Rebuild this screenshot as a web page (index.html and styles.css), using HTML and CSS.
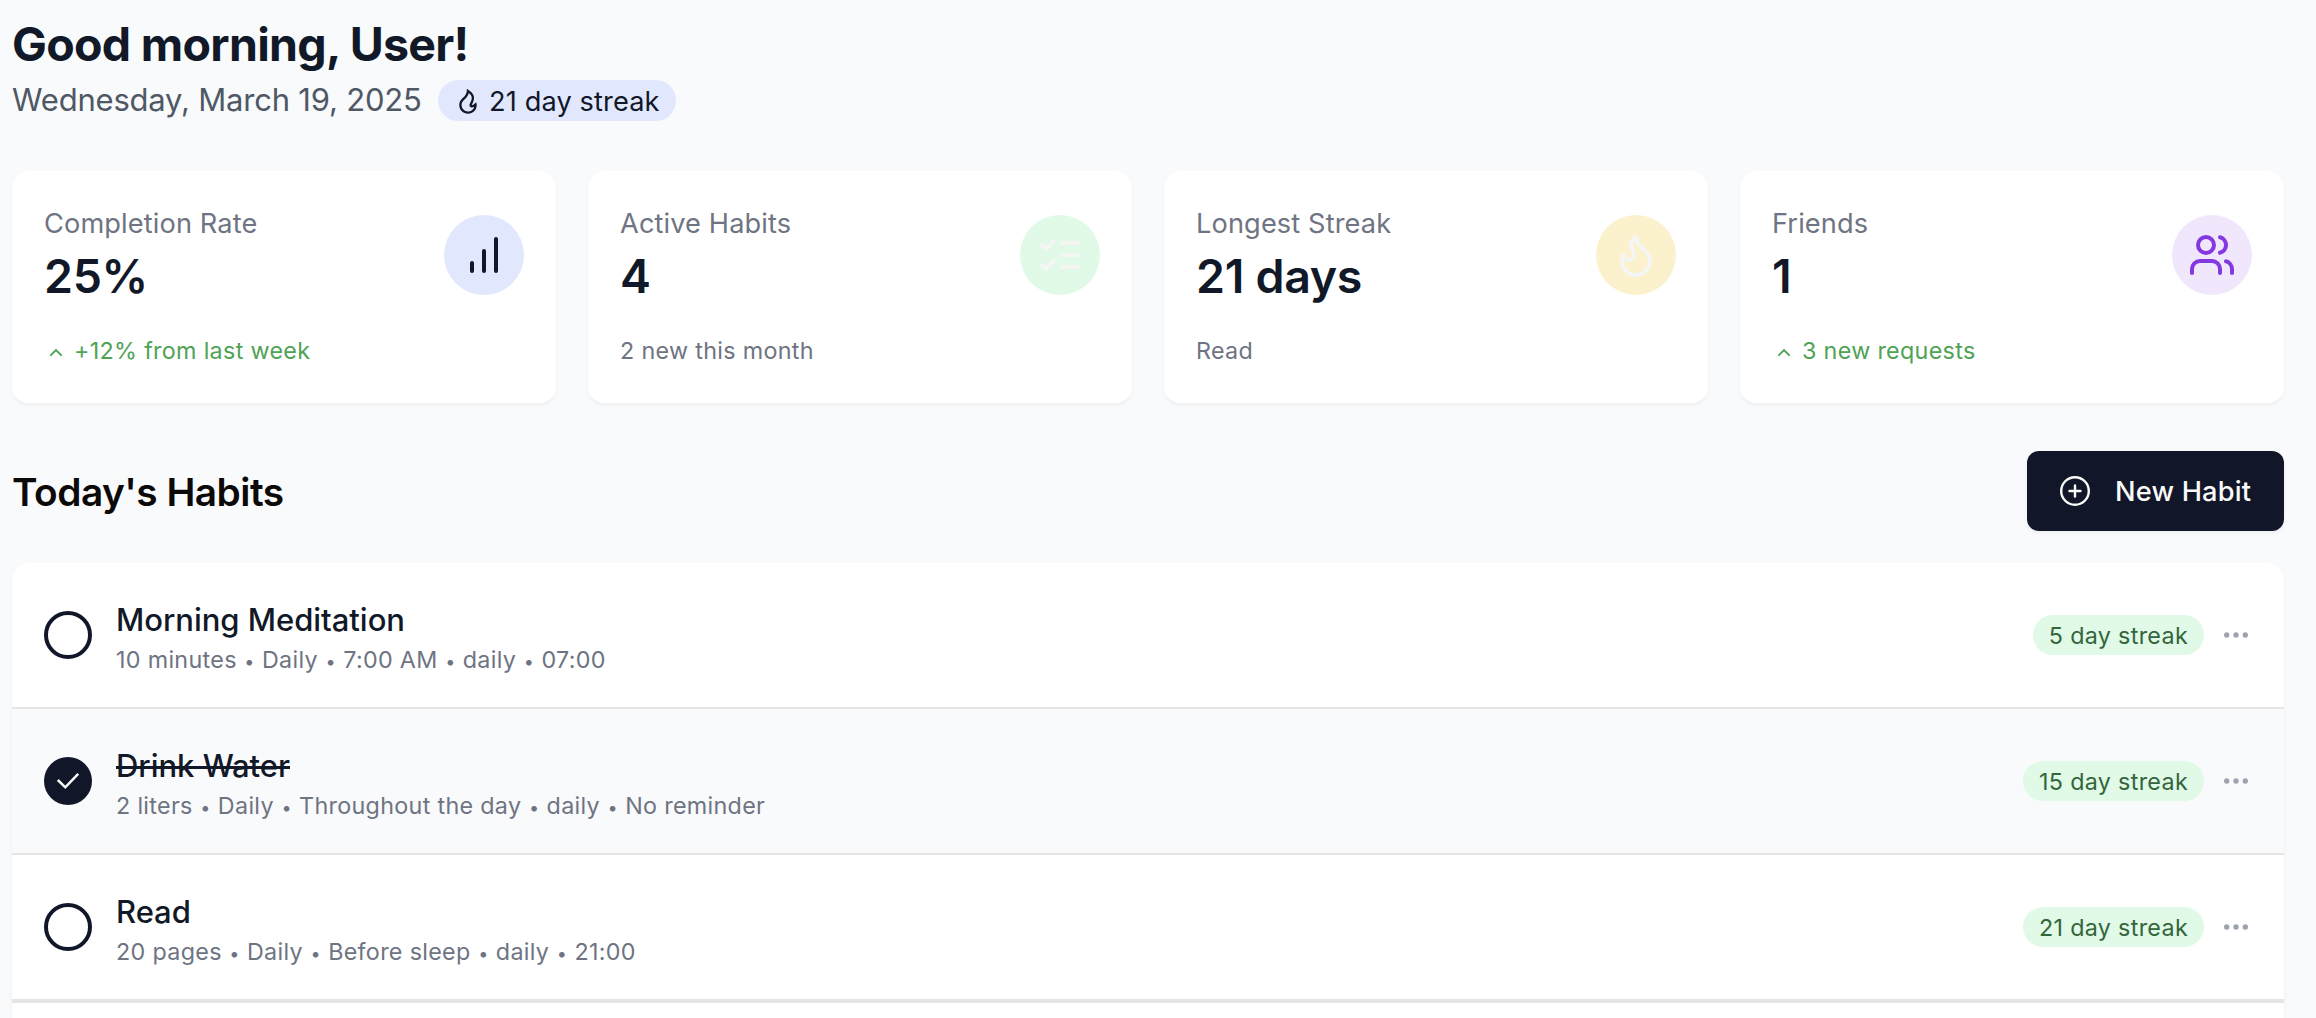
FILE: index.html
```html
<!DOCTYPE html>
<html lang="en">
<head>
<meta charset="utf-8">
<title>Habits</title>
<link rel="stylesheet" href="styles.css">
</head>
<body>
<main class="page">
  <header class="greeting">
    <h1>Good morning, User!</h1>
    <div class="sub">
      <span class="date">Wednesday, March 19, 2025</span>
      <span class="streak-pill"><svg class="i-flame" viewBox="0 0 24 24"><path fill="currentColor" d="M12 23C16.1421 23 19.5 19.6421 19.5 15.5C19.5 14.6345 19.2697 13.8032 19 13.0296C17.3333 14.6765 16.0667 15.5 15.2 15.5C19.1954 8.5 17 5.5 11 1.5C11.5 6.49951 8.20403 8.77375 6.86179 10.0366C5.40786 11.4045 4.5 13.3462 4.5 15.5C4.5 19.6421 7.85786 23 12 23ZM12.7094 5.23498C15.9511 7.98528 15.9666 10.1223 13.463 14.5086C12.702 15.8419 13.6648 17.5 15.2 17.5C15.8884 17.5 16.5841 17.2992 17.3189 16.9051C16.6979 19.262 14.5519 21 12 21C8.96243 21 6.5 18.5376 6.5 15.5C6.5 13.9608 7.13279 12.5276 8.23225 11.4932C8.35826 11.3747 8.99749 10.8081 9.02477 10.7836C9.44862 10.4021 9.7978 10.0663 10.1429 9.69677C11.3733 8.37932 12.2571 6.91631 12.7094 5.23498Z"/></svg><span>21 day streak</span></span>
    </div>
  </header>

  <section class="stats">
    <article class="card">
      <div class="card-top">
        <div><div class="label">Completion Rate</div><div class="value">25%</div></div>
        <div class="disc indigo"><svg class="icon" viewBox="0 0 24 24"><path d="M6 20v-4M12 20V10M18 20V4"/></svg></div>
      </div>
      <div class="note up"><svg class="chev" viewBox="0 0 24 24"><path d="M17.700 14.700l-5.700-5.700-5.700 5.700"/></svg><span>+12% from last week</span></div>
    </article>
    <article class="card">
      <div class="card-top">
        <div><div class="label">Active Habits</div><div class="value">4</div></div>
        <div class="disc green"><svg class="icon" viewBox="0 0 24 24"><path d="M3 17l2 2 4-4M3 7l2 2 4-4M13 6h8M13 12h8M13 18h8"/></svg></div>
      </div>
      <div class="note">2 new this month</div>
    </article>
    <article class="card">
      <div class="card-top">
        <div><div class="label">Longest Streak</div><div class="value">21 days</div></div>
        <div class="disc amber"><svg class="icon" viewBox="0 0 24 24"><path d="M8.5 14.5A2.5 2.5 0 0 0 11 12c0-1.38-.5-2-1-3-1.072-2.143-.224-4.054 2-6 .5 2.5 2 4.9 4 6.5 2 1.6 3 3.5 3 5.5a7 7 0 1 1-14 0c0-1.153.433-2.294 1-3a2.5 2.5 0 0 0 2.5 2.5z"/></svg></div>
      </div>
      <div class="note">Read</div>
    </article>
    <article class="card">
      <div class="card-top">
        <div><div class="label">Friends</div><div class="value">1</div></div>
        <div class="disc purple"><svg class="icon" viewBox="0 0 24 24"><path d="M16 21v-2a4 4 0 0 0-4-4H6a4 4 0 0 0-4 4v2M22 21v-2a4 4 0 0 0-3-3.87M16 3.13a4 4 0 0 1 0 7.75"/><circle cx="9" cy="7" r="4"/></svg></div>
      </div>
      <div class="note up"><svg class="chev" viewBox="0 0 24 24"><path d="M17.700 14.700l-5.700-5.700-5.700 5.700"/></svg><span>3 new requests</span></div>
    </article>
  </section>

  <div class="section-head">
    <h2>Today's Habits</h2>
    <button class="new-btn"><svg class="i-plus" viewBox="0 0 32 32"><circle cx="16" cy="16" r="13.8"/><path d="M16 10.500v11M10.500 16h11"/></svg><span>New Habit</span></button>
  </div>

  <section class="habits">
    <div class="row">
      <span class="check"></span>
      <div class="info"><div class="name">Morning Meditation</div><div class="meta">10 minutes<i>•</i>Daily<i>•</i>7:00 AM<i>•</i>daily<i>•</i>07:00</div></div>
      <span class="tag">5 day streak</span>
      <svg class="dots" viewBox="0 0 24 6"><circle cx="2.7" cy="3" r="2.7"/><circle cx="12" cy="3" r="2.7"/><circle cx="21.3" cy="3" r="2.7"/></svg>
    </div>
    <div class="row done">
      <span class="check"><svg viewBox="0 0 48 48"><path d="M13.800 23l7.500 7.300L34.200 16.800"/></svg></span>
      <div class="info"><div class="name"><span>Drink Water</span></div><div class="meta">2 liters<i>•</i>Daily<i>•</i>Throughout the day<i>•</i>daily<i>•</i>No reminder</div></div>
      <span class="tag">15 day streak</span>
      <svg class="dots" viewBox="0 0 24 6"><circle cx="2.7" cy="3" r="2.7"/><circle cx="12" cy="3" r="2.7"/><circle cx="21.3" cy="3" r="2.7"/></svg>
    </div>
    <div class="row">
      <span class="check"></span>
      <div class="info"><div class="name">Read</div><div class="meta">20 pages<i>•</i>Daily<i>•</i>Before sleep<i>•</i>daily<i>•</i>21:00</div></div>
      <span class="tag">21 day streak</span>
      <svg class="dots" viewBox="0 0 24 6"><circle cx="2.7" cy="3" r="2.7"/><circle cx="12" cy="3" r="2.7"/><circle cx="21.3" cy="3" r="2.7"/></svg>
    </div>
    <div class="more"></div>
  </section>
</main>
</body>
</html>
```
FILE: styles.css
```css
* { box-sizing: border-box; }
html, body { height: 100%; }
body { margin: 0; background: #f9fafc; color: #111827; font-family: Inter, "Liberation Sans", sans-serif; overflow: hidden; }
svg { display: block; flex: none; fill: none; stroke-linecap: round; stroke-linejoin: round; }
h1, h2 { margin: 0; }
.page { padding: 12px 32px 0 12px; }
h1 { font-size: 46.5px; line-height: 64px; font-weight: 700; letter-spacing: -.7px; }
.sub { display: flex; align-items: center; height: 49px; }
.date { width: 426px; padding-bottom: 2px; font-size: 31px; line-height: 46px; letter-spacing: -.2px; color: #4f5865; white-space: nowrap; }
.streak-pill { display: flex; align-items: center; height: 41px; width: 238px; padding-left: 16px; border-radius: 21px; background: #e1e7fd; color: #111729; font-size: 27.2px; letter-spacing: .12px; white-space: nowrap; }
.streak-pill span { padding-top: 1px; }
.i-flame { width: 28px; height: 28px; margin-right: 7px; }
.stats { display: grid; grid-template-columns: repeat(4, 1fr); gap: 32px; margin-top: 46px; }
.card { height: 232px; padding: 32px; background: #fff; border-radius: 16px; box-shadow: 0 2px 4px rgba(0, 0, 0, .05); }
.card-top { display: flex; justify-content: space-between; align-items: flex-start; height: 104px; }
.label { padding-top: 1px; font-size: 27.2px; line-height: 40px; letter-spacing: .12px; color: #6e7482; }
.value { font-size: 46.5px; line-height: 64px; font-weight: 600; letter-spacing: -.3px; }
.disc { width: 80px; height: 80px; margin-top: 12px; border-radius: 50%; display: grid; place-items: center; }
.icon { width: 48px; height: 48px; stroke: currentColor; stroke-width: 2; }
.indigo { background: #e1e7fd; color: #111729; }
.green { background: #e1f9e7; color: #f5f5f4; }
.amber { background: #fcf1cd; color: #f5f5f4; }
.purple { background: #f1e7fd; color: #8339df; }
.note { display: flex; align-items: center; margin-top: 27px; height: 32px; font-size: 23.3px; letter-spacing: .32px; color: #6e7482; }
.up { color: #4fa355; }
.chev { width: 24px; height: 24px; margin: 6px 6px 0 0; stroke: currentColor; stroke-width: 1.9; stroke-linecap: butt; stroke-linejoin: miter; }
.section-head { display: flex; justify-content: space-between; align-items: center; height: 80px; margin-top: 48px; }
h2 { padding-top: 2px; font-size: 38.8px; line-height: 56px; font-weight: 600; letter-spacing: -.5px; color: #0c0a09; }
.new-btn { display: flex; align-items: center; width: 257px; height: 80px; padding: 0 0 0 32px; border: 0; border-radius: 12px; background: #111729; color: #fafaf9; font: 500 27.2px Inter, "Liberation Sans", sans-serif; letter-spacing: .2px; white-space: nowrap; box-shadow: 0 2px 4px rgba(0, 0, 0, .05); }
.i-plus { width: 32px; height: 32px; margin-right: 24px; stroke: currentColor; stroke-width: 2.4; }
.habits { margin-top: 32px; background: #fff; border-radius: 16px 16px 0 0; box-shadow: 0 2px 4px rgba(0, 0, 0, .05); }
.row { display: flex; align-items: center; height: 146px; padding: 0 36px 0 32px; border-bottom: 2px solid #e6e5e3; }
.done { background: #f9fafc; }
.check { width: 48px; height: 48px; border: 4px solid #111729; border-radius: 50%; flex: none; }
.done .check { border: 0; background: #111729; }
.check svg { width: 48px; height: 48px; stroke: #fafaf9; stroke-width: 2.5; stroke-linecap: butt; stroke-linejoin: miter; }
.info { margin-left: 24px; padding-top: 2px; flex: 1; }
.name { font-size: 31px; line-height: 48px; font-weight: 500; letter-spacing: -.03px; }
.done .name span { text-decoration: line-through 3px; }
.meta { font-size: 23.3px; line-height: 32px; letter-spacing: .32px; color: #6e7482; white-space: nowrap; }
.meta i { display: inline-block; width: 25.2px; text-align: center; font-style: normal; font-size: 18px; line-height: 1; letter-spacing: 0; }
.tag { height: 40px; line-height: 41px; padding: 0 16px; border-radius: 20px; background: #e1f9e7; color: #33663b; font-size: 23.3px; letter-spacing: .32px; white-space: nowrap; }
.dots { width: 24px; height: 6px; margin-left: 20px; fill: #9ea3af; }
.more { height: 40px; border-top: 2px solid #e6e5e3; }
```
